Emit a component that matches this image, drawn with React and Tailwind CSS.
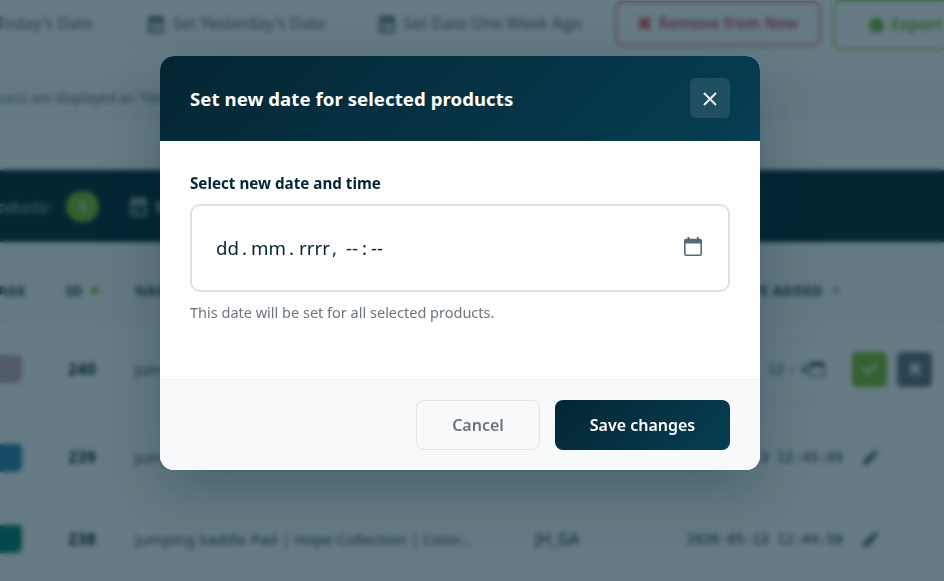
import React from "react";
import { FaCheck, FaTimes, FaPen } from "react-icons/fa";

function CalendarSolid({ className }) {
  return (
    <svg viewBox="0 0 16 18" className={className} fill="currentColor">
      <path
        fillRule="evenodd"
        d="M3 0h2.4v2h5.2V0H13v2h1.2A1.8 1.8 0 0 1 16 3.800V16.200A1.800 1.800 0 0 1 14.200 18H1.800A1.800 1.800 0 0 1 0 16.200V3.800A1.800 1.800 0 0 1 1.800 2H3zM2 6.500V15.800H14V6.500zM3.800 8h2.200v2.200H3.800zM7 8h2.200v2.200H7zM10.200 8h2.200v2.200h-2.200zM3.800 11.800h2.200v2.200H3.800zM7 11.800h2.200v2.200H7z"
      />
    </svg>
  );
}

function DatePickerIcon({ className }) {
  return (
    <svg viewBox="0 0 18 19" className={className}>
      <rect x="0.800" y="2.500" width="16.400" height="15.700" rx="1.500" fill="none" stroke="currentColor" strokeWidth="1.600" />
      <path d="M0.300 3.200q0-1.200 1.200-1.200h15q1.200 0 1.200 1.200v3.300H0.300z" fill="currentColor" />
      <path d="M4.500 0v3M13.800 0v3" stroke="currentColor" strokeWidth="2" />
    </svg>
  );
}

function ToolbarButton({ label, className }) {
  return (
    <div className={`flex h-[43px] shrink-0 items-center justify-center gap-2 rounded-lg border-2 border-[#eff1f2] bg-[#fafbfc] pt-px text-[15.800px] font-medium text-[#75838a] ${className}`}>
      <CalendarSolid className="h-[18px] w-4 text-[#4a626d]" />
      <span className="whitespace-nowrap">{label}</span>
    </div>
  );
}

function Row({ id, name, swatch, code, className, children }) {
  return (
    <div className={`flex items-center border-b border-[#f1f3f4] ${className}`}>
      <div className={`h-7 w-[22px] shrink-0 rounded-br-md rounded-tr-sm ${swatch}`} />
      <div className="w-[113px] shrink-0 pl-[46px] pt-px text-[15.500px] font-bold tracking-[0.500px] text-[#042633]">{id}</div>
      <div className="w-[400px] shrink-0 whitespace-nowrap text-[15.200px] text-[#33505c]">{name}</div>
      <div className="w-[120px] shrink-0 pt-0.5 text-[15.500px] font-medium text-[#33505c]">{code}</div>
      <div className="flex h-full grow items-center justify-end">{children}</div>
    </div>
  );
}

function Timestamp({ value }) {
  return (
    <>
      <span className="whitespace-pre font-['DejaVu_Sans_Mono',monospace] text-[13.700px] text-[#1d3c49]">{value}</span>
      <div className="ml-[9px] mr-[56px] flex h-9 w-9 items-center justify-center rounded-md border border-[#f2f4f5]">
        <FaPen className="h-[15px] w-[15px] text-[#4a626d]" />
      </div>
    </>
  );
}

function ProductsPage() {
  return (
    <div className="flex h-[581px] w-[944px] flex-col overflow-hidden bg-[#fafbfc]">
      <div className="flex h-[74px] shrink-0 items-start">
        <div className="flex w-[116px] shrink-0 justify-end">
          <ToolbarButton label="Set Today's Date" className="mt-0.5 w-[194px]" />
        </div>
        <ToolbarButton label="Set Yesterday's Date" className="ml-[11px] mt-0.5 w-[220px]" />
        <ToolbarButton label="Set Date One Week Ago" className="ml-3 mt-0.5 w-[243px]" />
        <div className="ml-[13px] mt-px flex h-[45px] w-[206px] shrink-0 items-center justify-center gap-2 rounded-lg border-2 border-[#e0808a] text-[15.500px] font-semibold text-[#dc4a58]">
          <FaTimes className="h-[15px] w-[13px]" strokeWidth="60" stroke="currentColor" />
          <span className="whitespace-nowrap">Remove from New</span>
        </div>
        <div className="ml-[12px] flex h-[50px] w-[150px] shrink-0 items-center rounded-lg border-2 border-[#9dcb74] pl-[34px] text-[15.500px] font-bold text-[#74b53c]">
          <span className="mr-[7px] h-[15px] w-[15px] rounded-full bg-[#74b53c]" />
          <span>Export</span>
        </div>
      </div>
      <div className="flex h-[46px] shrink-0 items-center border-y border-[#f1f3f5] bg-[#f5f7f8] text-[14px] text-[#65767e]">
        <span className="-ml-[29px] whitespace-nowrap tracking-[-0.200px]">Products are displayed as "New"</span>
      </div>
      <div className="h-[50px] shrink-0 border-b border-[#eef0f2]">
        <div className="h-[30px] border-b border-[#f0f1f3]" />
      </div>
      <div className="flex h-[72px] shrink-0 items-center bg-[#042633] text-white">
        <div className="flex w-[51px] justify-end whitespace-nowrap pt-1 text-[15.500px] text-[#b5bec3]">Selected products:</div>
        <div className="ml-[15px] flex h-[31px] w-[33px] items-center justify-center rounded-full bg-[#7cb82e] text-[15px] font-bold text-[#dfe8d5]">1</div>
        <CalendarSolid className="ml-[31px] h-[19px] w-[17px] text-[#b5bec3]" />
        <span className="ml-2 text-[15px] font-semibold">Set</span>
      </div>
      <div className="flex h-[81px] shrink-0 items-center border-b border-[#e6eaed] bg-[#f5f7f8] pt-4 text-[14px] font-bold tracking-[0.400px] text-[#2b4855]">
        <div className="flex w-[26px] shrink-0 justify-end">IMAGE</div>
        <div className="ml-10 flex w-[69px] shrink-0 items-center gap-[8px]">
          ID <span className="h-[7px] w-[7px] rounded-full bg-[#7cb82e]" />
        </div>
        <div className="grow">NAME</div>
        <div className="mr-[105px] flex items-center gap-[10px] whitespace-nowrap">
          DATE ADDED <span className="h-1.5 w-1.5 rounded-full bg-[#8f9ca3]" />
        </div>
      </div>
      <Row id="240" name="Jump" swatch="bg-[#c5a9b3]" className="h-[93px] shrink-0">
        <div className="flex h-[66px] w-[188px] items-center justify-end rounded-lg border-2 border-[#eff1f2] pr-4 font-['DejaVu_Sans_Mono',monospace] text-[13.700px] text-[#33505c]">
          <span className="flex w-[41px]">
            <span className="w-[20px]">12</span>
            <span className="w-[12px]">:</span>
            <span>4</span>
          </span>
          <DatePickerIcon className="h-4 w-4" />
        </div>
        <div className="ml-[9px] flex h-[35px] w-[35px] shrink-0 items-center justify-center rounded-[5px] bg-[#7cb82e] text-[#dfe8d5]">
          <FaCheck className="h-4 w-4" />
        </div>
        <div className="ml-[10px] mr-3 flex h-[35px] w-[35px] shrink-0 items-center justify-center rounded-[5px] bg-[#62707e] text-[#e0e4e8]">
          <FaTimes className="h-4 w-4" stroke="currentColor" strokeWidth="40" />
        </div>
      </Row>
      <Row id="239" name="Jump" swatch="bg-[#2f86b0]" className="h-[84px] shrink-0">
        <Timestamp value="2026-05-13 12:45:09" />
      </Row>
      <Row id="238" name="Jumping Saddle Pad | Hope Collection | Color..." swatch="bg-[#087a71]" code="JH_GA" className="h-[79px] shrink-0">
        <Timestamp value="2026-05-13 12:44:58" />
      </Row>
    </div>
  );
}

function DateField() {
  return (
    <div className="mt-2.5 flex h-[88px] items-center justify-between rounded-[10px] border-2 border-[#e0e1e4] bg-white pl-6 pr-[26px]">
      <div className="flex text-[18.700px] leading-6 text-[#042633]">
        <span className="w-[26px]">dd</span>
        <span className="w-[9px]">.</span>
        <span className="w-[38px]">mm</span>
        <span className="w-[10px]">.</span>
        <span className="w-[33px]">rrrr</span>
        <span className="w-[14px]">,</span>
        <span className="w-[16px]">--</span>
        <span className="w-[9px]">:</span>
        <span>--</span>
      </div>
      <DatePickerIcon className="mb-[3px] h-[19px] w-[18px] text-[#526b76]" />
    </div>
  );
}

function DateModal() {
  return (
    <div className="flex h-[414px] w-[600px] flex-col overflow-hidden rounded-[14px] bg-white shadow-[0_20px_60px_rgba(4,38,51,0.3)]">
      <div className="flex h-[85px] shrink-0 items-center justify-between bg-linear-135 from-[#042633] to-[#063e53] px-[30px]">
        <h2 className="whitespace-nowrap pt-px text-[18.600px] font-bold tracking-[0.060px] text-white">Set new date for selected products</h2>
        <button className="mb-px flex h-10 w-10 items-center justify-center rounded-md bg-white/10 text-[#e8eef0]">
          <svg viewBox="0 0 14 14" className="mt-0.5 h-3.5 w-3.5" fill="none" stroke="currentColor" strokeWidth="2.100">
            <path d="M1 1l12 12M13 1L1 13" />
          </svg>
        </button>
      </div>
      <div className="grow px-[30px] pt-[31px]">
        <label className="block whitespace-nowrap text-[15.200px] font-bold leading-[22px] text-[#042633]">Select new date and time</label>
        <DateField />
        <p className="mt-[9px] whitespace-nowrap text-[14.500px] leading-[22px] text-[#6c757d]">This date will be set for all selected products.</p>
      </div>
      <div className="flex h-[91px] shrink-0 items-center justify-end gap-[15px] border-t border-[#eceef0] bg-[#f8f9fb] px-[30px]">
        <button className="h-[50px] w-[124px] rounded-lg border border-[#e2e4e6] text-[16px] font-semibold text-[#6c757d]">Cancel</button>
        <button className="h-[50px] w-[175px] rounded-lg bg-linear-135 from-[#042633] to-[#063e53] text-[16px] font-semibold text-white">Save changes</button>
      </div>
    </div>
  );
}

export default function App() {
  return (
    <div className="relative h-[581px] w-[944px] overflow-hidden font-['Noto_Sans',sans-serif]">
      <ProductsPage />
      <div className="absolute inset-0 flex justify-center bg-[#042633]/60 pr-6 pt-14 backdrop-blur-[2.500px]">
        <DateModal />
      </div>
    </div>
  );
}
